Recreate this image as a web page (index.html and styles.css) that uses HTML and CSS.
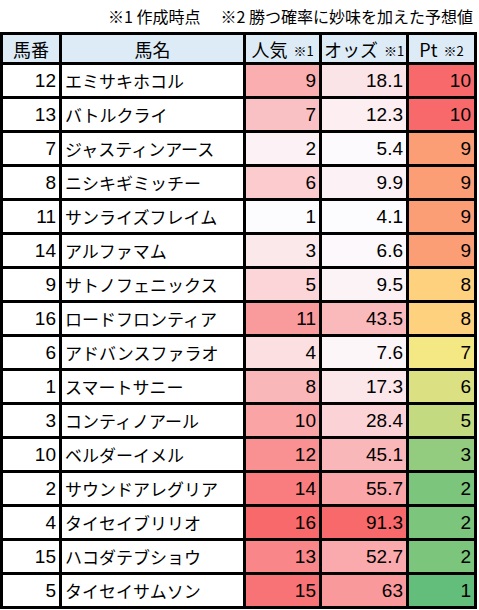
FILE: index.html
```html
<!DOCTYPE html>
<html lang="ja">
<head>
<meta charset="utf-8">
<title>予想表</title>
<link rel="stylesheet" href="styles.css">
</head>
<body>
<div class="note"><span>※1 作成時点</span><span class="gap">※2 勝つ確率に妙味を加えた予想値</span></div>
<div class="sheet">
  <div class="hd">馬番</div><div class="hd">馬名</div><div class="hd">人気<small>※1</small></div><div class="hd">オッズ<small>※1</small></div><div class="hd">Pt<small>※2</small></div>

  <div class="num">12</div><div class="name">エミサキホコル</div><div class="num" style="background:rgb(250,174,176)">9</div><div class="num" style="background:rgb(251,228,231)">18.1</div><div class="num" style="background:rgb(248,105,107)">10</div>
  <div class="num">13</div><div class="name">バトルクライ</div><div class="num" style="background:rgb(250,193,196)">7</div><div class="num" style="background:rgb(252,238,241)">12.3</div><div class="num" style="background:rgb(248,105,107)">10</div>
  <div class="num">7</div><div class="name">ジャスティンアース</div><div class="num" style="background:rgb(252,242,245)">2</div><div class="num" style="background:rgb(252,250,253)">5.4</div><div class="num" style="background:rgb(251,157,117)">9</div>
  <div class="num">8</div><div class="name">ニシキギミッチー</div><div class="num" style="background:rgb(251,203,206)">6</div><div class="num" style="background:rgb(252,242,245)">9.9</div><div class="num" style="background:rgb(251,157,117)">9</div>
  <div class="num">11</div><div class="name">サンライズフレイム</div><div class="num" style="background:rgb(252,252,255)">1</div><div class="num" style="background:rgb(252,252,255)">4.1</div><div class="num" style="background:rgb(251,157,117)">9</div>
  <div class="num">14</div><div class="name">アルファマム</div><div class="num" style="background:rgb(251,232,235)">3</div><div class="num" style="background:rgb(252,248,251)">6.6</div><div class="num" style="background:rgb(251,157,117)">9</div>
  <div class="num">9</div><div class="name">サトノフェニックス</div><div class="num" style="background:rgb(251,213,215)">5</div><div class="num" style="background:rgb(252,243,246)">9.5</div><div class="num" style="background:rgb(254,209,127)">8</div>
  <div class="num">16</div><div class="name">ロードフロンティア</div><div class="num" style="background:rgb(249,154,156)">11</div><div class="num" style="background:rgb(250,186,188)">43.5</div><div class="num" style="background:rgb(254,209,127)">8</div>
  <div class="num">6</div><div class="name">アドバンスファラオ</div><div class="num" style="background:rgb(251,223,225)">4</div><div class="num" style="background:rgb(252,246,249)">7.6</div><div class="num" style="background:rgb(243,232,131)">7</div>
  <div class="num">1</div><div class="name">スマートサニー</div><div class="num" style="background:rgb(250,183,186)">8</div><div class="num" style="background:rgb(251,230,233)">17.3</div><div class="num" style="background:rgb(219,225,130)">6</div>
  <div class="num">3</div><div class="name">コンティノアール</div><div class="num" style="background:rgb(250,164,166)">10</div><div class="num" style="background:rgb(251,211,214)">28.4</div><div class="num" style="background:rgb(195,218,129)">5</div>
  <div class="num">10</div><div class="name">ベルダーイメル</div><div class="num" style="background:rgb(249,144,146)">12</div><div class="num" style="background:rgb(250,183,185)">45.1</div><div class="num" style="background:rgb(147,204,126)">3</div>
  <div class="num">2</div><div class="name">サウンドアレグリア</div><div class="num" style="background:rgb(249,125,127)">14</div><div class="num" style="background:rgb(250,165,167)">55.7</div><div class="num" style="background:rgb(123,197,124)">2</div>
  <div class="num">4</div><div class="name">タイセイブリリオ</div><div class="num" style="background:rgb(248,105,107)">16</div><div class="num" style="background:rgb(248,105,107)">91.3</div><div class="num" style="background:rgb(123,197,124)">2</div>
  <div class="num">15</div><div class="name">ハコダテブショウ</div><div class="num" style="background:rgb(249,134,137)">13</div><div class="num" style="background:rgb(250,170,172)">52.7</div><div class="num" style="background:rgb(123,197,124)">2</div>
  <div class="num">5</div><div class="name">タイセイサムソン</div><div class="num" style="background:rgb(248,115,117)">15</div><div class="num" style="background:rgb(249,153,155)">63</div><div class="num" style="background:rgb(99,190,123)">1</div>
</div>
</body>
</html>
```

FILE: styles.css
```css
html, body {
  margin: 0;
  padding: 0;
  background: #ffffff;
}

body {
  width: 479px;
  font-family: "Liberation Sans", "Noto Sans CJK JP", sans-serif;
  color: #000000;
}

.note {
  height: 32px;
  display: flex;
  justify-content: flex-end;
  align-items: center;
  padding-right: 6px;
  font-family: "Noto Sans CJK JP", sans-serif;
  font-size: 16px;
  white-space: pre;
}

.note .gap {
  margin-left: 20px;
}

.sheet {
  width: 477px;
  display: grid;
  grid-template-columns: 56px 181px 73px 84px 65px;
  grid-template-rows: 27px repeat(16, 31px);
  gap: 3px;
  padding: 3px;
  box-sizing: border-box;
  background: #000000;
}

.sheet > div {
  background: #ffffff;
  display: flex;
  align-items: center;
  overflow: hidden;
  white-space: nowrap;
}

.hd {
  background: #ddebf7 !important;
  justify-content: center;
  font-family: "Noto Sans CJK JP", sans-serif;
  font-size: 18px;
}

.hd small {
  font-size: 13px;
  margin-left: 6px;
  padding-top: 3px;
}

.num {
  justify-content: flex-end;
  padding-right: 3px;
  font-size: 19px;
}

.name {
  padding-left: 3px;
  font-family: "Noto Sans CJK JP", sans-serif;
  font-size: 17px;
}
```
